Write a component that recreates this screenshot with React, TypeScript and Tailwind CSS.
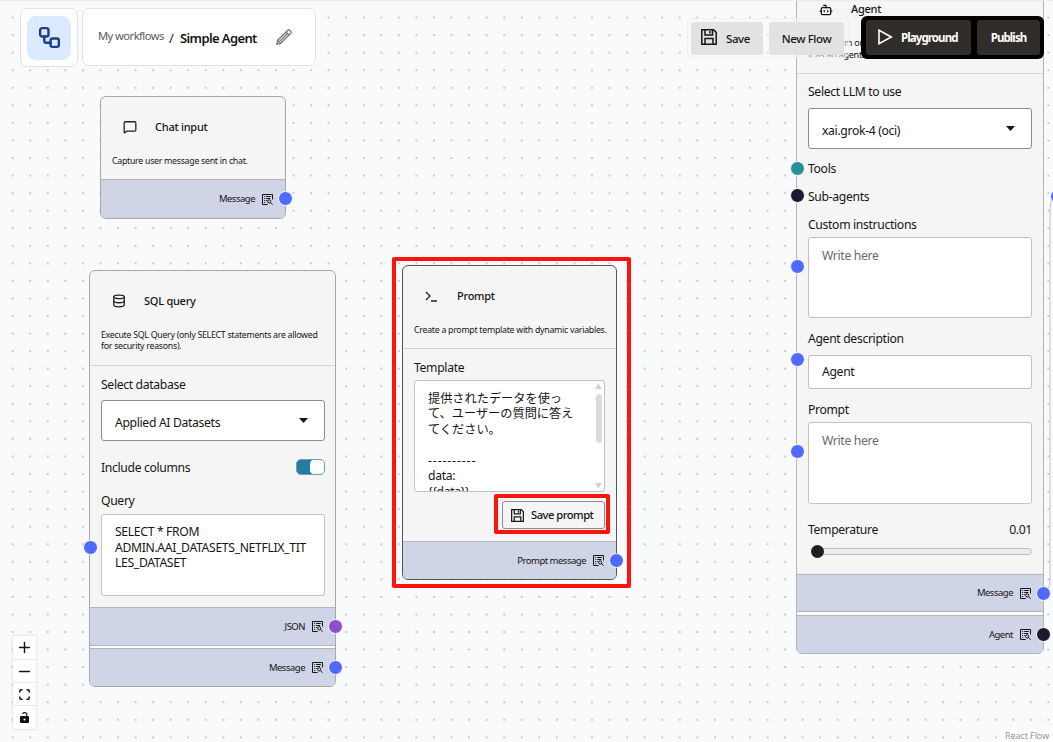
import React from 'react';
import {
  Bot,
  Database,
  MessageSquare,
  Minus,
  Plus,
  Workflow,
} from 'lucide-react';
import clsx from 'clsx';

type HandleProps = {
  color: string;
  className: string;
};

function Handle({ color, className }: HandleProps) {
  return (
    <span
      className={clsx(
        'absolute z-10 size-[15px] rounded-full border border-white',
        color,
        className
      )}
    />
  );
}

function SaveIcon({ className }: { className?: string }) {
  return (
    <svg
      className={className}
      viewBox="0 0 16 16"
      fill="none"
      stroke="currentColor"
      strokeWidth={1.5}
    >
      <path d="M0.8 0.8H12.6L15.2 3.4V15.2H0.8Z" />
      <path d="M4 1v5h7.5V1M9 2v2.6M4 15V9.6h8V15" />
    </svg>
  );
}

function PencilIcon() {
  return (
    <svg
      className="size-4"
      viewBox="0 0 16 16"
      fill="none"
      stroke="#7d7975"
      strokeWidth={1.4}
      strokeLinejoin="round"
    >
      <path d="M.8 15.200L1.700 11.300 11.800 1.200Q12.700.4 13.600 1.200L14.800 2.400Q15.600 3.300 14.800 4.200L4.700 14.300Z" />
      <path d="M10 3l3 3M4 12l7.500-7.500M1.700 11.300l3 3" />
    </svg>
  );
}

function OutputIcon() {
  return (
    <svg
      className="size-[11px]"
      viewBox="0 0 11 11"
      fill="none"
      stroke="#161513"
      strokeWidth={1}
    >
      <path d="M5.6 10.500H.5V.5h10v5" />
      <path d="M2.2 2.500h1M4.2 2.500h4.600M2.2 4.500h1M4.2 4.500h4M2.2 6.500h1M2.2 8.500h1M4.2 6.500h1" />
      <circle cx="7.2" cy="7.4" r="1.6" />
      <path d="M8.4 8.6l2.2 2" />
    </svg>
  );
}

type NodeHeaderProps = {
  icon: React.ReactNode;
  title: string;
  children: React.ReactNode;
  className: string;
};

function NodeHeader({ icon, title, children, className }: NodeHeaderProps) {
  return (
    <div className={clsx('shrink-0 px-[11px] pt-[22px]', className)}>
      <div className="flex h-4 items-center pl-[11px] text-[11px] font-medium tracking-[-0.25px]">
        <span className="w-[32px] shrink-0 text-[#222]">{icon}</span>
        {title}
      </div>
      <p className="mt-[21px] whitespace-nowrap text-[8.8px] leading-[11px] tracking-[-0.28px]">
        {children}
      </p>
    </div>
  );
}

type OutputRowProps = {
  label: string;
  color: string;
  className: string;
};

function OutputRow({ label, color, className }: OutputRowProps) {
  return (
    <div
      className={clsx(
        'relative flex shrink-0 items-center justify-end gap-[7px] border-t border-[#b4b5ba] bg-[#d0d4e7] pr-[12px] text-[9.5px] tracking-[-0.5px]',
        className
      )}
    >
      <span>{label}</span>
      <OutputIcon />
      <Handle color={color} className="right-[-7.5px] top-[11px]" />
    </div>
  );
}

function Label({ children, className }: { children: React.ReactNode; className?: string }) {
  return <div className={clsx('flex h-4 items-center', className)}>{children}</div>;
}

function Select({ value, className }: { value: string; className: string }) {
  return (
    <div
      className={clsx(
        'flex h-[41px] items-center justify-between rounded-[3px] border border-[#8d8c8a] bg-white pl-[13px] pr-4',
        className
      )}
    >
      <span className="pt-[5px]">{value}</span>
      <svg className="h-[5px] w-[9px]" viewBox="0 0 9 5">
        <path d="M0 0h9L4.500 5z" fill="#161513" />
      </svg>
    </div>
  );
}

const boxClass = 'rounded-[3px] border border-[#c2c2c2] bg-white pl-[13px]';

function ChatInputNode() {
  return (
    <div className="absolute left-[100px] top-[96px] flex h-[123px] w-[186px] flex-col rounded-[6px] border border-[#a8a8a8] bg-[#f5f5f5]">
      <NodeHeader
        className="h-[82px]"
        title="Chat input"
        icon={<MessageSquare size={14} strokeWidth={2.2} />}
      >
        Capture user message sent in chat.
      </NodeHeader>
      <OutputRow label="Message" color="bg-[#4f6bff]" className="h-[39px] rounded-b-[5px]" />
    </div>
  );
}

function SqlQueryNode() {
  return (
    <div className="absolute left-[89px] top-[270px] flex h-[417px] w-[247px] flex-col rounded-[6px] border border-[#a8a8a8] bg-[#f5f5f5]">
      <NodeHeader
        className="h-[94px]"
        title="SQL query"
        icon={<Database size={14} strokeWidth={2.2} />}
      >
        Execute SQL Query (only SELECT statements are allowed
        <br />
        for security reasons).
      </NodeHeader>
      <div className="h-[242px] border-t border-[#d5d5d5] pl-[11px] pr-[10px] pt-[11px]">
        <Label>Select database</Label>
        <Select className="mt-[7px]" value="Applied AI Datasets" />
        <div className="mt-[18px] flex h-4 items-center justify-between">
          <span className="pt-[2px]">Include columns</span>
          <span className="flex h-4 w-[29px] justify-end rounded-[5px] border border-[#6b9fb5] bg-[#227e9e]">
            <span className="h-[14px] w-[14px] rounded-[4px] bg-white" />
          </span>
        </div>
        <Label className="mt-[18px]">Query</Label>
        <div className={clsx(boxClass, 'relative mt-[5px] h-[82px] pt-[9px] leading-[15.5px]')}>
          SELECT * FROM
          <br />
          ADMIN.AAI_DATASETS_NETFLIX_TIT
          <br />
          LES_DATASET
          <Handle color="bg-[#4f6bff]" className="-left-[19px] top-[24.500px]" />
        </div>
      </div>
      <OutputRow label="JSON" color="bg-[#8d4fd0]" className="h-[38px]" />
      <div className="h-[3px] shrink-0 border-t border-[#b4b5ba] bg-white" />
      <OutputRow label="Message" color="bg-[#4f6bff]" className="h-[38px] rounded-b-[5px]" />
    </div>
  );
}

function PromptNode() {
  return (
    <div className="absolute left-[402px] top-[265px] flex h-[315px] w-[215px] flex-col rounded-[6px] border border-[#555] bg-[#f5f5f5]">
      <NodeHeader
        className="h-[82px]"
        title="Prompt"
        icon={
          <svg
            className="h-3 w-3"
            viewBox="0 0 12 12"
            fill="none"
            stroke="currentColor"
            strokeWidth={1.3}
          >
            <path d="M1 2l4 4-4 4M6 11h6" />
          </svg>
        }
      >
        Create a prompt template with dynamic variables.
      </NodeHeader>
      <div className="h-[193px] border-t border-[#d5d5d5] px-[11px] pt-[11px]">
        <Label>Template</Label>
        <div className={clsx(boxClass, 'mt-1 flex h-[112px] justify-between overflow-hidden')}>
          <div className="whitespace-pre pt-[9.500px] text-[12.2px] leading-[15.5px]">
            <div className="tracking-normal">
              提供されたデータを使っ
              <br />
              て、ユーザーの質問に答え
              <br />
              てください。
            </div>
            <div className="pt-[15.5px] tracking-[0.9px]">----------</div>
            <div>data:</div>
            <div>{'{{data}}'}</div>
          </div>
          <div className="flex w-[11px] flex-col items-center py-[3px]">
            <svg className="h-[5px] w-[7px]" viewBox="0 0 7 5">
              <path d="M0 5h7L3.500 0z" fill="#d0d0d0" />
            </svg>
            <div className="mt-[5px] h-[49px] w-[6px] rounded-full bg-[#dcdcdc]" />
            <svg className="mt-auto h-[5px] w-[7px]" viewBox="0 0 7 5">
              <path d="M0 0h7L3.500 5z" fill="#d0d0d0" />
            </svg>
          </div>
        </div>
        <div className="mt-[9px] flex justify-end">
          <div className="flex h-7 w-[103px] items-center gap-[7px] whitespace-nowrap rounded-[3px] border border-[#8d8c8a] pl-2 text-[11.2px] font-medium tracking-[-0.5px]">
            <SaveIcon className="size-[13px]" />
            Save prompt
          </div>
        </div>
      </div>
      <OutputRow label="Prompt message" color="bg-[#4f6bff]" className="h-[38px] rounded-b-[5px]" />
    </div>
  );
}

function AgentNode() {
  return (
    <div className="absolute left-[796px] top-[-13px] flex h-[667px] w-[248px] flex-col rounded-[6px] border border-[#b4b4b4] bg-[#f5f5f5]">
      <div className="h-[85px] shrink-0 pt-[13px]">
        <div className="flex h-4 items-center pl-[22px] text-[11px] font-medium tracking-[-0.25px]">
          <Bot className="mr-[18px] mt-[2px]" size={14} strokeWidth={2.2} />
          Agent
        </div>
        <div className="pt-[20px] text-[9px] leading-[12px] tracking-[-0.22px]">
          <div className="pl-[47px]">m or</div>
          <div className="pl-[11px]">it as an agent.</div>
        </div>
      </div>
      <div className="h-[501px] border-t border-[#d5d5d5] px-[11px] pt-[10px]">
        <Label>Select LLM to use</Label>
        <Select className="mt-[8px]" value="xai.grok-4 (oci)" />
        <Label className="relative mt-3">
          Tools
          <Handle color="bg-[#2a8f96]" className="-left-[18px] top-0" />
        </Label>
        <Label className="relative mt-3">
          Sub-agents
          <Handle color="bg-[#1c1b2e]" className="-left-[18px] -top-px" />
        </Label>
        <Label className="mt-3">Custom instructions</Label>
        <div className={clsx(boxClass, 'relative mt-1 h-[81px] pt-[10px] leading-4 text-[#6b6967]')}>
          Write here
          <Handle color="bg-[#4f6bff]" className="-left-[19px] top-[21px]" />
        </div>
        <Label className="mt-[13px]">Agent description</Label>
        <div className={clsx(boxClass, 'relative mt-2 flex h-[34px] items-center')}>
          Agent
          <Handle color="bg-[#4f6bff]" className="-left-[19px] -top-[4px]" />
        </div>
        <Label className="mt-[13px]">Prompt</Label>
        <div className={clsx(boxClass, 'relative mt-1 h-[82px] pt-[10px] leading-4 text-[#6b6967]')}>
          Write here
          <Handle color="bg-[#4f6bff]" className="-left-[19px] top-[21px]" />
        </div>
        <div className="mt-[18px] flex h-4 items-center justify-between">
          <span>Temperature</span>
          <span>0.01</span>
        </div>
        <div className="mt-[7px] flex h-[13px] items-center pl-[3px]">
          <span className="z-10 size-[13px] shrink-0 rounded-full bg-[#1f1e1c]" />
          <span className="-ml-2 h-[7px] grow rounded-full border border-[#bcbcbc] bg-[#ececec]" />
        </div>
      </div>
      <OutputRow label="Message" color="bg-[#4f6bff]" className="h-[37px]" />
      <div className="h-[4px] shrink-0 border-t border-[#b4b5ba] bg-white" />
      <OutputRow label="Agent" color="bg-[#1c1b2e]" className="h-[38px] rounded-b-[5px]" />
    </div>
  );
}

function Controls() {
  return (
    <div className="absolute left-[13px] top-[636px] flex w-[23px] flex-col divide-y divide-[#e8e8e8] bg-white shadow-[0_0_2px_1px_rgba(0,0,0,0.08)]">
      <button className="flex h-6 items-center justify-center" aria-label="Zoom in">
        <Plus size={17} strokeWidth={2} />
      </button>
      <button className="flex h-[23px] items-center justify-center" aria-label="Zoom out">
        <Minus size={17} strokeWidth={2} />
      </button>
      <button className="flex h-[23px] items-center justify-center" aria-label="Fit view">
        <svg className="size-[11px]" viewBox="0 0 11 11" fill="none" stroke="#111" strokeWidth={1.5}>
          <path d="M.8 3.500V2Q.8.8 2 .8h1.500M7.500.8H9Q10.200.8 10.200 2v1.500M10.200 7.500V9Q10.200 10.200 9 10.200H7.500M3.500 10.200H2Q.8 10.200.8 9V7.500" />
        </svg>
      </button>
      <button className="flex h-[23px] items-center justify-center" aria-label="Toggle interactivity">
        <svg className="h-[11px] w-[9px]" viewBox="0 0 9 11">
          <path d="M2.300 1.600Q4.800-.3 6.800 1.700V4.500" fill="none" stroke="#111" strokeWidth="1.100" />
          <rect x="0" y="4" width="9" height="7" rx="1" fill="#111" />
          <circle cx="4.500" cy="7.400" r="1" fill="#fff" />
        </svg>
      </button>
    </div>
  );
}

function TopBar() {
  return (
    <header className="absolute inset-x-0 top-0 z-20 flex items-start justify-between border-t border-[#ececec] pl-5 pr-[9px]">
      <div className="flex gap-1 pt-[7px]">
        <div className="flex h-[59px] w-[58px] items-center justify-center rounded-[7px] border border-[#e2e2e2] bg-white">
          <div className="flex size-[44px] items-center justify-center rounded-[9px] bg-[#dbeafe]">
            <Workflow size={25} strokeWidth={2.3} className="text-[#1e3a8a]" />
          </div>
        </div>
        <div className="flex h-[58px] w-[234px] items-center rounded-[7px] border border-[#e2e2e2] bg-white pl-[15px] text-[13px]">
          <span className="mb-[2px] w-[66px] whitespace-nowrap text-[11.2px] text-[#5c5a57] tracking-[-0.55px]">
            My workflows
          </span>
          <span className="ml-[5px] w-[11px] pt-[2px]">/</span>
          <span className="w-[96px] whitespace-nowrap pt-[2px] font-semibold tracking-[-0.62px]">
            Simple Agent
          </span>
          <PencilIcon />
        </div>
      </div>
      <div className="flex gap-[12px] pt-[15px] text-[11.5px]">
        <div className="mt-[2px] flex h-10 w-[162px] gap-[6px] rounded-[5px] border border-[#f0f0f0] bg-[#f8f8f8]/50 pl-[3px] pt-[3px] font-medium tracking-[-0.4px]">
          <button className="flex h-[33px] w-[72px] items-center gap-[9px] rounded-[3px] bg-[#e2e2e2] pl-[10px]">
            <SaveIcon className="mb-[3px] size-4" />
            Save
          </button>
          <button className="h-[33px] w-[75px] rounded-[3px] bg-[#e2e2e2]">New Flow</button>
        </div>
        <div className="flex h-[43px] w-[183px] gap-[6px] rounded-[6px] bg-black pl-[5px] pt-1 font-bold text-white tracking-[-0.9px]">
          <button className="flex h-[35px] w-[105px] items-center gap-[8px] rounded-[3px] bg-[#312d2a] pl-[12px]">
            <svg
              className="mb-[2px] h-4 w-[15px]"
              viewBox="0 0 15 16"
              fill="none"
              stroke="currentColor"
              strokeWidth={1.6}
            >
              <path d="M1 1.300L13.300 8 1 14.700Z" />
            </svg>
            Playground
          </button>
          <button className="h-[35px] w-[63px] rounded-[3px] bg-[#312d2a]">Publish</button>
        </div>
      </div>
    </header>
  );
}

export default function App() {
  return (
    <main className="relative h-[742px] w-[1053px] overflow-hidden bg-[#f9fafc] font-['Noto_Sans','Noto_Sans_CJK_JP',sans-serif] text-[12.2px] leading-4 text-[#161513] tracking-[-0.34px]">
      {/* dotted canvas */}
      <svg className="absolute inset-0 size-full">
        <pattern id="dots" x="3.900" y="8.800" width="17.555" height="17.555" patternUnits="userSpaceOnUse">
          <circle cx="8.780" cy="8.780" r="0.700" fill="#7f8286" />
        </pattern>
        <rect width="100%" height="100%" fill="url(#dots)" />
        <path d="M1043 593Q1050 591 1050 580V215Q1050 200 1053 197" fill="none" stroke="#c4c4c8" />
      </svg>
      <ChatInputNode />
      <SqlQueryNode />
      <PromptNode />
      <AgentNode />
      <Handle color="bg-[#4f6bff]" className="left-[1050px] top-[189px]" />

      {/* highlights */}
      <div className="absolute left-[392px] top-[257px] h-[331px] w-[239px] rounded-[2px] border-4 border-[#ff130c]" />
      <div className="absolute left-[494px] top-[494px] z-10 h-[40px] w-[116px] rounded-[2px] border-4 border-[#ff130c]" />

      <TopBar />
      <Controls />
      <div className="absolute bottom-0 right-0 bg-white/50 pl-1 pr-[4px] text-[9px] leading-[13px] tracking-[-0.1px] text-[#999]">
        React Flow
      </div>
    </main>
  );
}
